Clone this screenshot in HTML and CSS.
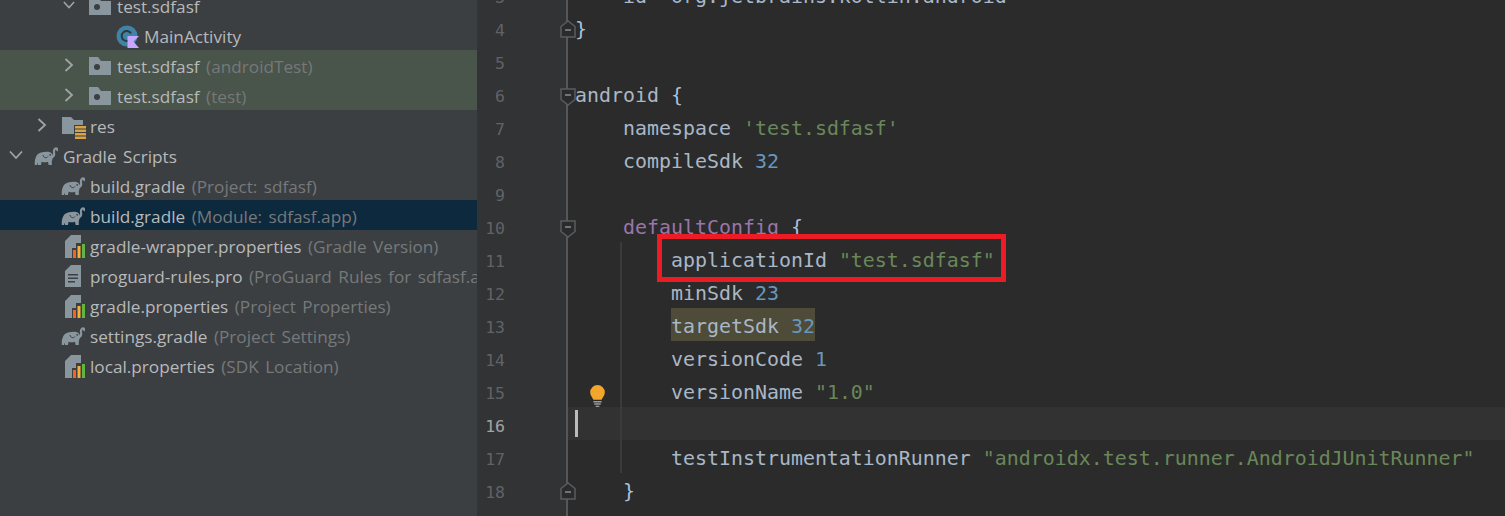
FILE: index.html
```html
<!DOCTYPE html>
<html lang="en">
<head>
<meta charset="utf-8">
<title>build.gradle</title>
<link rel="stylesheet" href="styles.css">
</head>
<body>
<svg class="defs" width="0" height="0" aria-hidden="true">
  <symbol id="elephant" viewBox="0 0 24 18">
    <path d="M.8 18C.4 12 2.200 6.800 7 5.600 10 4.800 13.500 4.400 16 5.200 18 5.800 19 7.500 19 10 18.600 12 18 13 17.800 14.500L17.800 18 14.600 18 14 14.800C12 15.500 9.500 15.500 7.600 14.800L7 18 4 18 3.800 15.500 3 18Z" fill="#8a969e"/>
    <path d="M17.500 10.500C20 9.800 20.400 7.500 20 5.500 19.700 3.200 20.800 1.300 22 1.300 23.200 1.300 23.500 3 22.700 3.800" fill="none" stroke="#8a969e" stroke-width="2.200"/>
    <circle cx="16.200" cy="7.800" r=".9" fill="#3c3f41"/>
    <path d="M9 8C9.500 11 12.500 11.500 14 9.500" fill="none" stroke="#3c3f41" stroke-width="1"/>
  </symbol>
  <symbol id="package" viewBox="0 0 22 18">
    <path d="M0 0H9L12 4H22V18H0Z" fill="#8a969e"/>
    <circle cx="8" cy="10" r="3" fill="#3c3f41"/>
  </symbol>
  <symbol id="resfolder" viewBox="0 0 24 22">
    <path d="M0 0H9L12 3H21V8H12V17H0Z" fill="#8a969e"/>
    <path d="M13 9H24V11.500H13ZM13 12.500H24V15H13ZM13 16H24V18.500H13ZM13 19.500H24V22H13Z" fill="#d9a343"/>
  </symbol>
  <symbol id="props" viewBox="0 0 21 23">
    <path d="M6 0H16V8H11V13H7V23H0V6Z" fill="#8a969e"/>
    <path d="M8 15H11V23H8Z" fill="#f26522"/>
    <path d="M12.500 11H15.500V23H12.500Z" fill="#f4af3d"/>
    <path d="M17 9H20V23H17Z" fill="#62b543"/>
  </symbol>
  <symbol id="textfile" viewBox="0 0 16 22">
    <path d="M6 0H16V22H0V6Z" fill="#8a969e"/>
    <path d="M3 9H13V10.500H3ZM3 12.500H13V14H3ZM3 16H10V17.500H3Z" fill="#3c3f41"/>
  </symbol>
  <symbol id="chev-right" viewBox="0 0 12 14">
    <path d="M2.500 1L9 7 2.500 13" fill="none" stroke="#a0a4a7" stroke-width="1.800"/>
  </symbol>
  <symbol id="chev-down" viewBox="0 0 14 12">
    <path d="M1 2.500L7 9 13 2.500" fill="none" stroke="#a0a4a7" stroke-width="1.800"/>
  </symbol>
  <symbol id="fold-end" viewBox="0 0 16 18">
    <path d="M1 17V6.500L8 1 15 6.500V17Z" fill="#2b2b2b" stroke="#5a5d5f" stroke-width="1.500"/>
    <path d="M5 10H11" stroke="#8a8d8f" stroke-width="1.500"/>
  </symbol>
  <symbol id="fold-start" viewBox="0 0 16 18">
    <path d="M1 1V11.500L8 17 15 11.500V1Z" fill="#2b2b2b" stroke="#5a5d5f" stroke-width="1.500"/>
    <path d="M5 7H11" stroke="#8a8d8f" stroke-width="1.500"/>
  </symbol>
</svg>

<main class="ide">
  <nav class="tree">
    <div class="row d2"><svg class="chev"><use href="#chev-down"/></svg><svg class="ico pkg"><use href="#package"/></svg><span>test.sdfasf</span></div>
    <div class="row leaf-class">
      <svg class="ico kt" viewBox="0 0 24 24">
        <circle cx="11" cy="11" r="10.500" fill="#3f84a5"/>
        <path d="M15 8.500A5 5 0 1 0 15 13.500" fill="none" stroke="#2f3a40" stroke-width="2"/>
        <path d="M11.500 11H23L17.500 16.500 23 23H11.500Z" fill="#c8a6ff"/>
      </svg>
      <span>MainActivity</span>
    </div>
    <div class="row d2 tinted"><svg class="chev"><use href="#chev-right"/></svg><svg class="ico pkg"><use href="#package"/></svg><span>test.sdfasf <em>(androidTest)</em></span></div>
    <div class="row d2 tinted"><svg class="chev"><use href="#chev-right"/></svg><svg class="ico pkg"><use href="#package"/></svg><span>test.sdfasf <em>(test)</em></span></div>
    <div class="row d1"><svg class="chev"><use href="#chev-right"/></svg><svg class="ico res"><use href="#resfolder"/></svg><span>res</span></div>
    <div class="row d0"><svg class="chev"><use href="#chev-down"/></svg><svg class="ico ele"><use href="#elephant"/></svg><span>Gradle Scripts</span></div>
    <div class="row leaf"><svg class="ico ele"><use href="#elephant"/></svg><span>build.gradle <em>(Project: sdfasf)</em></span></div>
    <div class="row leaf selected"><svg class="ico ele"><use href="#elephant"/></svg><span>build.gradle <em>(Module: sdfasf.app)</em></span></div>
    <div class="row leaf"><svg class="ico prop"><use href="#props"/></svg><span>gradle-wrapper.properties <em>(Gradle Version)</em></span></div>
    <div class="row leaf"><svg class="ico txt"><use href="#textfile"/></svg><span>proguard-rules.pro <em>(ProGuard Rules for sdfasf.app)</em></span></div>
    <div class="row leaf"><svg class="ico prop"><use href="#props"/></svg><span>gradle.properties <em>(Project Properties)</em></span></div>
    <div class="row leaf"><svg class="ico ele"><use href="#elephant"/></svg><span>settings.gradle <em>(Project Settings)</em></span></div>
    <div class="row leaf"><svg class="ico prop"><use href="#props"/></svg><span>local.properties <em>(SDK Location)</em></span></div>
  </nav>

  <section class="editor">
    <div class="guide"></div>
    <div class="line"><b class="num">3</b><code class="code">    id 'org.jetbrains.kotlin.android'</code></div>
    <div class="line"><b class="num">4</b><svg class="fold close"><use href="#fold-end"/></svg><code class="code"><i class="brace">}</i></code></div>
    <div class="line"><b class="num">5</b><code class="code"></code></div>
    <div class="line"><b class="num">6</b><svg class="fold open"><use href="#fold-start"/></svg><code class="code">android <i class="brace">{</i></code></div>
    <div class="line"><b class="num">7</b><code class="code">    namespace <i class="str">'test.sdfasf'</i></code></div>
    <div class="line"><b class="num">8</b><code class="code">    compileSdk <i class="nr">32</i></code></div>
    <div class="line"><b class="num">9</b><code class="code"></code></div>
    <div class="line"><b class="num">10</b><svg class="fold open"><use href="#fold-start"/></svg><code class="code">    <i class="kw">defaultConfig</i> <i class="brace">{</i></code></div>
    <div class="line"><b class="num">11</b><code class="code">        applicationId <i class="str">"test.sdfasf"</i></code></div>
    <div class="line"><b class="num">12</b><code class="code">        minSdk <i class="nr">23</i></code></div>
    <div class="line"><b class="num">13</b><code class="code">        <i class="warn">targetSdk <i class="nr">32</i></i></code></div>
    <div class="line"><b class="num">14</b><code class="code">        versionCode <i class="nr">1</i></code></div>
    <div class="line"><b class="num">15</b>
      <svg class="bulb" viewBox="0 0 18 24">
        <path d="M9 0A8 8 0 0 1 17 8C17 11.500 14.500 13.500 13.500 16H4.500C3.500 13.500 1 11.500 1 8A8 8 0 0 1 9 0Z" fill="#f2a62b"/>
        <path d="M4.500 17.500H13.500V19H4.500ZM5.500 20H12.500V21.500H5.500ZM7 22.500H11V24H7Z" fill="#9b9b9b"/>
      </svg>
      <code class="code">        versionName <i class="str">"1.0"</i></code></div>
    <div class="line current"><b class="num">16</b><span class="caret"></span><code class="code"></code></div>
    <div class="line"><b class="num">17</b><code class="code">        testInstrumentationRunner <i class="str">"androidx.test.runner.AndroidJUnitRunner"</i></code></div>
    <div class="line"><b class="num">18</b><svg class="fold close"><use href="#fold-end"/></svg><code class="code">    <i class="brace">}</i></code></div>
    <div class="line"><b class="num"></b><code class="code"></code></div>
    <div class="callout"></div>
  </section>
</main>
</body>
</html>
```

FILE: styles.css
```css
* { box-sizing: border-box; }
html, body { margin: 0; height: 100%; overflow: hidden; background: #2b2b2b; }
.defs { position: absolute; }

.ide { display: flex; height: 516px; overflow: hidden; }

/* Project tree */
.tree {
  width: 477px;
  flex: none;
  height: 516px;
  overflow: hidden;
  background: #3c3f41;
  color: #b7b9bb;
  font-family: "Open Sans", "Noto Sans", sans-serif;
  font-size: 17.200px;
  word-spacing: 2px;
}
.row {
  display: flex;
  align-items: center;
  height: 30px;
  white-space: nowrap;
}
.row:first-child { margin-top: -10px; }
.row span { padding-top: 2px; }
.row em { font-style: normal; color: #76797b; }
.tinted { background: #49544a; }
.selected { background: #0d293e; }
.d0 { padding-left: 9px; }
.d1 { padding-left: 36px; }
.d2 { padding-left: 63px; }
.leaf { padding-left: 61px; }
.leaf-class { padding-left: 116px; }

.chev { width: 12px; height: 14px; flex: none; margin-right: 14px; }
.d0 .chev { width: 14px; height: 12px; margin-right: 11px; }
.ico { flex: none; }
.pkg { width: 22px; height: 18px; margin: 2px 6px 0 0; }
.res { width: 24px; height: 22px; margin: 6px 4px 0 0; }
.ele { width: 24px; height: 18px; margin: 2px 5px 0 0; }
.prop { width: 21px; height: 23px; margin: 3px 4px 0 4px; }
.txt { width: 16px; height: 22px; margin: 1px 9px 0 4px; }
.kt { width: 24px; height: 24px; margin: 4px 4px 0 0; }

/* Editor */
.editor {
  position: relative;
  flex: 1;
  height: 516px;
  overflow: hidden;
}
.line {
  position: relative;
  display: flex;
  height: 33px;
}
.guide + .line { margin-top: -22px; }
.num {
  flex: none;
  width: 91px;
  height: 33px;
  padding-right: 61px;
  text-align: right;
  background: #313335;
  border-right: 2px solid #555759;
  font: 400 16.500px/39px "DejaVu Sans Mono", monospace;
  color: #606366;
}
.code {
  flex: 1;
  height: 33px;
  padding-left: 7px;
  white-space: pre;
  font: 400 19.930px/38px "DejaVu Sans Mono", monospace;
  color: #a9b7c6;
}
.code i { font-style: normal; }
.str { color: #6a8759; }
.nr { color: #6897bb; }
.kw { color: #9876aa; }
.brace { color: #a9c1dc; }
.warn { background: #4e4b39; display: inline-block; height: 33px; vertical-align: top; }
.current { background: #323232; }
.current .num { color: #a4a3a3; }

.fold {
  position: absolute;
  left: 83px;
  width: 16px;
  height: 18px;
}
.fold.close { top: 9px; }
.fold.open { top: 11px; }
.bulb {
  position: absolute;
  left: 112px;
  top: 11px;
  width: 17px;
  height: 22px;
}
.caret {
  position: absolute;
  left: 98px;
  top: 3px;
  width: 3px;
  height: 27px;
  background: #bbbbbb;
}
.guide {
  position: absolute;
  left: 143px;
  top: 242px;
  width: 2px;
  height: 231px;
  background: #3b3b3b;
  z-index: 1;
}
.callout {
  position: absolute;
  left: 180px;
  top: 234px;
  width: 349px;
  height: 48px;
  border: 5px solid #ed1c24;
  z-index: 2;
}
```
